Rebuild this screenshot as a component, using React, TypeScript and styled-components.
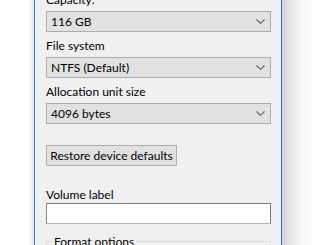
import React from "react";
import styled, { createGlobalStyle } from "styled-components";

const Global = createGlobalStyle`
  html, body { margin: 0; padding: 0; background: #ffffff; overflow: hidden; }
  body { width: 320px; height: 245px; }
`;

const Screen = styled.div`
  display: flex;
  width: 320px;
  height: 245px;
  overflow: hidden;
  font-family: "Segoe UI", Lato, "Liberation Sans", sans-serif;
  font-size: 12px;
  color: #000;
`;

const LeftGap = styled.div`
  width: 34px;
  flex: none;
  background: linear-gradient(to right, #ffffff 0px, #ffffff 27px, #ededed 33px, #e4e4e4 34px);
`;

const RightShade = styled.div`
  flex: 1;
  background: linear-gradient(to right, #d4d4d4 0px, #e6e6e6 8px, #f5f5f5 18px, #ffffff 34px);
`;

const Window = styled.div`
  width: 225px;
  flex: none;
  background: #f0f0f0;
  border-left: 1px solid #2b7fd1;
  border-right: 1px solid #1c79d3;
  padding: 0 10px 0 11px;
`;

const Content = styled.div`
  display: flex;
  flex-direction: column;
  margin-top: -8px;
`;

const Label = styled.div<{ $top?: number; $bottom?: number }>`
  line-height: 15px;
  height: 15px;
  margin-top: ${(p) => p.$top ?? 0}px;
  margin-bottom: ${(p) => p.$bottom ?? 4}px;
  white-space: nowrap;
`;

const Combo = styled.div`
  display: flex;
  align-items: center;
  justify-content: space-between;
  height: 19px;
  width: 215px;
  border: 1px solid #adadad;
  background: #e1e1e1;
  padding: 0 4px;
  line-height: 19px;
`;

const Chevron = styled.svg`
  width: 9px;
  height: 5px;
  margin-right: 1px;
  flex: none;
`;

const Button = styled.div`
  align-self: flex-start;
  margin-top: 21px;
  height: 19px;
  line-height: 19px;
  width: 129px;
  border: 1px solid #adadad;
  background: #e1e1e1;
  text-align: center;
  white-space: nowrap;
`;

const TextBox = styled.div`
  width: 223px;
  height: 19px;
  background: #ffffff;
  border: 1px solid #7a7a7a;
  border-bottom-color: #b4b4b4;
  border-left-color: #8a8a8a;
`;

const Group = styled.fieldset`
  margin: 10px 0 0 0;
  padding: 0;
  width: 225px;
  height: 20px;
  border: 1px solid #dcdcdc;
  box-sizing: border-box;
  & > legend {
    margin-left: 5px;
    padding: 0 2px;
    line-height: 15px;
  }
`;

const Arrow = () => (
  <Chevron viewBox="0 0 9 5">
    <path d="M0.5 0.5 L4.5 4.3 L8.5 0.5" fill="none" stroke="#606060" strokeWidth="1.1" />
  </Chevron>
);

const Select = ({ value }: { value: string }) => (
  <Combo>
    <span>{value}</span>
    <Arrow />
  </Combo>
);

export default function App() {
  return (
    <>
      <Global />
      <Screen>
        <LeftGap />
        <Window>
          <Content>
            <Label>Capacity:</Label>
            <Select value="116 GB" />
            <Label $top={6}>File system</Label>
            <Select value="NTFS (Default)" />
            <Label $top={6}>Allocation unit size</Label>
            <Select value="4096 bytes" />
            <Button>Restore device defaults</Button>
            <Label $top={21} $bottom={1}>Volume label</Label>
            <TextBox />
            <Group>
              <legend>Format options</legend>
            </Group>
          </Content>
        </Window>
        <RightShade />
      </Screen>
    </>
  );
}
